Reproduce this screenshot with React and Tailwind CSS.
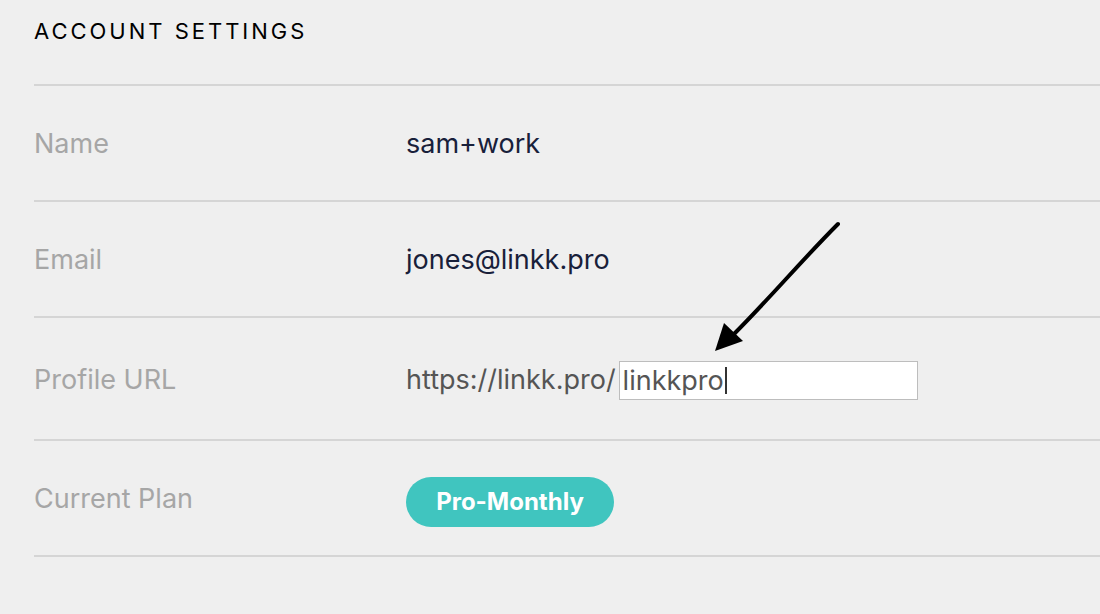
export default function App() {
  const rows = [
    { label: 'Name', h: 'h-[116px]', value: <span className="text-[#18203a]">sam+work</span> },
    { label: 'Email', h: 'h-[116px]', value: <span className="text-[#18203a]">jones@linkk.pro</span> },
    {
      label: 'Profile URL',
      h: 'h-[123px]',
      value: (
        <div className="flex items-center text-[#555555]">
          <span>https://linkk.pro/</span>
          <div className="ml-[3px] flex h-[39px] w-[299px] items-center border border-[#bdbdbd] bg-white pl-[3px]">
            <span className="leading-none">linkkpro</span>
            <span className="ml-[1px] h-[27px] w-[2px] bg-[#333]" />
          </div>
        </div>
      ),
    },
    {
      label: 'Current Plan',
      h: 'h-[116px]',
      value: (
        <span className="mt-[5px] inline-flex h-[50px] w-[208px] items-center justify-center rounded-full bg-[#40c5bf] text-[24px] font-bold text-white">
          Pro-Monthly
        </span>
      ),
    },
  ]

  return (
    <div className="relative h-[614px] w-[1100px] overflow-hidden bg-[#efefef] pl-[34px] font-['Inter','Liberation_Sans',sans-serif]">
      <h1 className="flex h-[84px] items-start pt-[15px] text-[22px] tracking-[0.136em] text-black">ACCOUNT SETTINGS</h1>
      <div className="border-t-2 border-[#d5d5d5]">
        {rows.map((r) => (
          <div key={r.label} className={`flex items-center border-b-2 border-[#d5d5d5] pt-[3px] ${r.h} text-[27px]`}>
            <div className="w-[372px] text-[#a6a6a6]">{r.label}</div>
            <div className="flex items-center">{r.value}</div>
          </div>
        ))}
      </div>
      <svg className="absolute left-0 top-0" width="1100" height="614" viewBox="0 0 1100 614">
        <path d="M838 224 C 802 260, 770 298, 734 334" fill="none" stroke="#000" strokeWidth="4" strokeLinecap="round" />
        <path d="M715 351 L724 323 L743 341 Z" fill="#000" />
      </svg>
    </div>
  )
}
